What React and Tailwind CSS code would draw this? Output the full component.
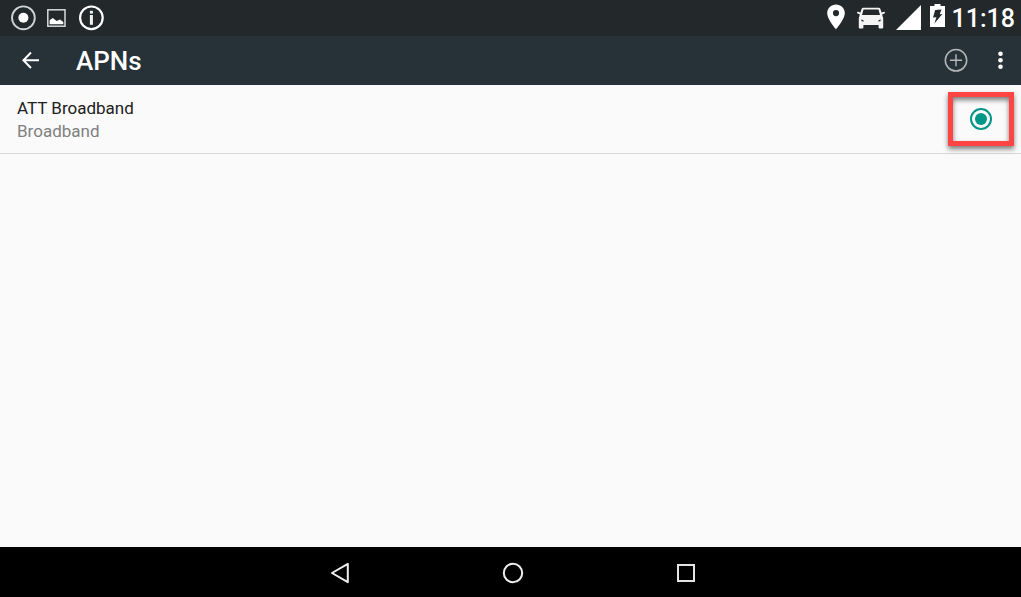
function RecordIcon() {
  return (
    <svg className="size-[26px]" viewBox="0 0 26 26" aria-hidden="true">
      <circle cx="13.4" cy="12.8" r="11.4" fill="none" stroke="#d0d2d3" strokeWidth="1.9" />
      <circle cx="13.4" cy="12.8" r="5" fill="#fff" />
    </svg>
  );
}

function ImageIcon() {
  return (
    <svg className="h-[18px] w-[19px]" viewBox="0 0 19 18" aria-hidden="true">
      <rect x="0.8" y="0.8" width="17.2" height="16.4" fill="none" stroke="#d8dadb" strokeWidth="1.5" />
      <path d="M2.6 15.2V11.2L5.8 9L9.6 12L13 10.4L16.3 13V15.2Z" fill="#fff" />
    </svg>
  );
}

function InfoIcon() {
  return (
    <svg className="size-[26px]" viewBox="0 0 26 26" aria-hidden="true">
      <circle cx="13.4" cy="12.8" r="11.3" fill="none" stroke="#fff" strokeWidth="2.2" />
      <rect x="11.9" y="10" width="3" height="9.8" fill="#f2f2f2" />
      <rect x="11.9" y="5.8" width="3" height="2.8" fill="#f2f2f2" />
    </svg>
  );
}

function PinIcon() {
  return (
    <svg className="h-[26px] w-[18px]" viewBox="0 0 18 26" aria-hidden="true">
      <path
        d="M9 0.5C4.1 0.5 0.2 4.3 0.2 9.1C0.2 15.5 9 25.4 9 25.4S17.8 15.5 17.8 9.1C17.8 4.3 13.9 0.5 9 0.5ZM9 12.2A3.1 3.1 0 1 1 9 6A3.1 3.1 0 0 1 9 12.2Z"
        fill="#fff"
      />
    </svg>
  );
}

function CarIcon() {
  return (
    <svg className="h-[22px] w-[28px]" viewBox="0 0 28 22" aria-hidden="true">
      <path
        fillRule="evenodd"
        fill="#f4f4f4"
        d="M6.4 0.8H21.6Q23 0.8 23.4 2.1L24.6 5.4L27 4.8Q28 4.7 28 5.6Q28 6.5 27 6.8L25.2 7.2L25.6 9.2L26.2 11V20.6Q26.2 21.6 25.2 21.6H22.6Q21.6 21.6 21.6 20.6V18H6.4V20.6Q6.4 21.6 5.4 21.6H2.8Q1.8 21.6 1.8 20.6V11L2.4 9.2L2.8 7.2L1 6.8Q0 6.5 0 5.6Q0 4.7 1 4.8L3.4 5.4L4.6 2.1Q5 0.8 6.4 0.8ZM6.5 2.6L5 8H23L21.5 2.6ZM4.2 12.4L4.6 14.2L7 14.4Q6.6 12.6 4.2 12.4ZM23.8 12.4L23.4 14.2L21 14.4Q21.4 12.6 23.8 12.4Z"
      />
    </svg>
  );
}

function SignalIcon() {
  return (
    <svg className="size-[25px]" viewBox="0 0 25 25" aria-hidden="true">
      <path d="M0 25L25 0V25Z" fill="#fff" />
    </svg>
  );
}

function BatteryIcon() {
  return (
    <svg className="h-[23px] w-[15px]" viewBox="0 0 15 23" aria-hidden="true">
      <path d="M4.5 0H10.5V2H15V23H0V2H4.5Z" fill="#fff" />
      <path d="M5.2 6L11.4 5.6L9.8 10.2L12.4 10L4.4 19.4L6.4 13.2L3 13.4Z" fill="#23282b" />
    </svg>
  );
}

function StatusBar() {
  return (
    <div className="flex h-9 items-center justify-between bg-[#23282b] pr-[6px] pl-[10px]">
      <div className="flex items-center pb-px">
        <RecordIcon />
        <span className="ml-[11px] flex"><ImageIcon /></span>
        <span className="ml-3 flex"><InfoIcon /></span>
      </div>
      <div className="flex items-center">
        <span className="mb-[2px] flex"><PinIcon /></span>
        <span className="ml-3 flex"><CarIcon /></span>
        <span className="mb-px ml-[11px] flex"><SignalIcon /></span>
        <span className="mb-[5px] ml-[9px] flex"><BatteryIcon /></span>
        <time className="ml-[7px] pt-[2px] text-[25px] leading-8 font-medium text-white">11:18</time>
      </div>
    </div>
  );
}

function AppBar() {
  return (
    <header className="flex h-[49px] items-center bg-[#263238] pr-2 pb-px pl-[18px]">
      <button type="button" aria-label="Navigate up" className="flex size-[26px] items-center justify-center">
        <svg className="size-[18px]" viewBox="0 0 18 18" fill="none" stroke="#fff" strokeWidth="2" aria-hidden="true">
          <path d="M17 9.3H2M9 1.5L1.4 9.3L9 17" />
        </svg>
      </button>
      <h1 className="ml-8 flex-1 pt-px text-[26px] leading-8 font-medium text-white">APNs</h1>
      <button type="button" aria-label="New APN" className="flex size-6 items-center justify-center">
        <svg className="size-6" viewBox="0 0 24 24" fill="none" stroke="#b4b8ba" aria-hidden="true">
          <circle cx="12" cy="12.3" r="10.7" strokeWidth="1.5" />
          <path d="M12 6.3V18.3M6 12.3H18" strokeWidth="1.4" />
        </svg>
      </button>
      <button type="button" aria-label="More options" className="ml-5 flex h-8 w-[25px] items-center justify-center">
        <svg className="h-[18px] w-[5px]" viewBox="0 0 5 18" fill="#fff" aria-hidden="true">
          <circle cx="2.5" cy="2.8" r="2.3" />
          <circle cx="2.5" cy="9.3" r="2.3" />
          <circle cx="2.5" cy="15.7" r="2.3" />
        </svg>
      </button>
    </header>
  );
}

function ApnRow() {
  return (
    <li className="flex items-center justify-between border-b border-[#d9d9d9] py-[7px] pr-[7px] pl-[17px]">
      <label htmlFor="apn-att" className="flex flex-1 flex-col pt-[2px] text-[17px] leading-[23px]">
        <span className="text-[#212121]">ATT Broadband</span>
        <span className="text-[#808080]">Broadband</span>
      </label>
      <span className="flex h-[54px] w-[66px] items-center justify-center border-[5px] border-[#ff4444] shadow-[0_3px_5px_rgba(0,0,0,0.5),inset_0_3px_5px_rgba(0,0,0,0.5)]">
        <input
          id="apn-att"
          type="radio"
          name="apn"
          defaultChecked
          className="grid size-[22px] appearance-none place-content-center rounded-full border-2 border-[#009688] before:size-3 before:rounded-full checked:before:bg-[#009688]"
        />
      </span>
    </li>
  );
}

function NavBar() {
  return (
    <nav className="flex h-[50px] items-center justify-center bg-black pt-[2px] pl-1">
      <button type="button" aria-label="Back" className="flex h-full w-[173px] items-center justify-center">
        <svg className="size-[22px]" viewBox="0 0 22 22" fill="none" stroke="#eee" strokeWidth="2" aria-hidden="true">
          <path d="M18.8 1.8V20.2L3 11Z" strokeLinejoin="round" />
        </svg>
      </button>
      <button type="button" aria-label="Home" className="flex h-full w-[173px] items-center justify-center">
        <svg className="size-[22px]" viewBox="0 0 22 22" fill="none" stroke="#eee" strokeWidth="2" aria-hidden="true">
          <circle cx="11" cy="11" r="9.2" />
        </svg>
      </button>
      <button type="button" aria-label="Recent apps" className="flex h-full w-[173px] items-center justify-center">
        <svg className="size-[18px]" viewBox="0 0 18 18" fill="none" stroke="#e4e4e4" strokeWidth="2" aria-hidden="true">
          <rect x="1" y="1" width="16" height="16" />
        </svg>
      </button>
    </nav>
  );
}

export default function App() {
  return (
    <div className="flex min-h-screen flex-col bg-[#fafafa] font-[Roboto,sans-serif]">
      <StatusBar />
      <AppBar />
      <main className="flex-1">
        <ul>
          <ApnRow />
        </ul>
      </main>
      <NavBar />
    </div>
  );
}
